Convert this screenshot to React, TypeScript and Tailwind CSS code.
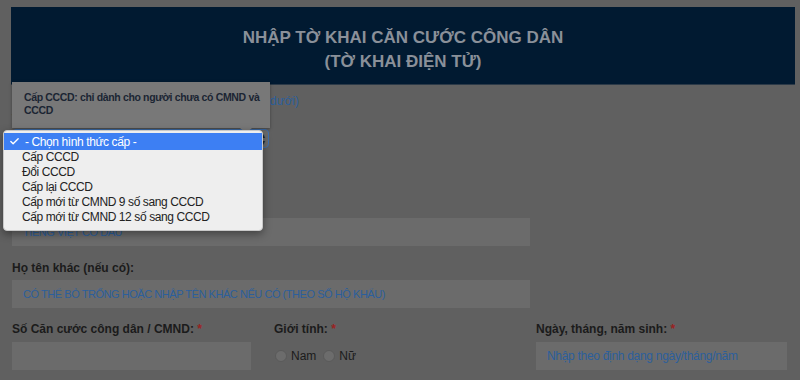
import { Check } from "lucide-react";

const OPTIONS = [
  "Cấp CCCD",
  "Đổi CCCD",
  "Cấp lại CCCD",
  "Cấp mới từ CMND 9 số sang CCCD",
  "Cấp mới từ CMND 12 số sang CCCD",
];

function Label({ text, required }: { text: string; required?: boolean }) {
  return (
    <div className="text-[12px] font-bold leading-[14px] text-[#1b1b1b]">
      {text}
      {required && <span className="text-[#9a2222]"> *</span>}
    </div>
  );
}

function Field({ value }: { value?: string }) {
  return (
    <div className="h-[28px] bg-[#6b6b6b] flex items-center px-[11px] text-[11px] tracking-[-0.45px] text-[#2b5f9c] whitespace-nowrap overflow-hidden">
      {value}
    </div>
  );
}

function Radio({ label }: { label: string }) {
  return (
    <label className="flex items-center gap-[4px] text-[12px] text-[#1b1b1b]">
      <span className="w-[12px] h-[12px] rounded-full bg-[#6c6c6c] border border-[#5a5a5a]" />
      {label}
    </label>
  );
}

export default function App() {
  return (
    <div
      className="relative w-[800px] h-[380px] overflow-hidden bg-[#606060]"
      style={{ fontFamily: '"Liberation Sans", Arial, sans-serif' }}
    >
      <div className="pl-[11px] pr-[5px] pt-[7px]">
        <div className="h-[78px] bg-[#011a31] border-b border-[#2c3a48] pt-[8px] flex flex-col items-center justify-center text-[17px] font-bold leading-[24px] text-[#8a9099]">
          <div>NHẬP TỜ KHAI CĂN CƯỚC CÔNG DÂN</div>
          <div>(TỜ KHAI ĐIỆN TỬ)</div>
        </div>

        <div className="pl-[1px] pr-[8px]">
          <div className="mt-[9px] w-[287px] flex justify-end whitespace-nowrap overflow-hidden text-[12px] leading-[14px] text-[#2b5f9c]">
            <span>(xem hướng dẫn ở phía dưới)</span>
          </div>
          <div className="mt-[4px]">
            <Label text="Vui lòng chọn hình thức cấp thẻ:" required />
          </div>
          <div className="mt-[3px] w-[257px] h-[19px] rounded-[4px] border border-[#3d6fb0] bg-[#6b6b6b] flex items-center justify-end pr-[3px] text-[8px] leading-[7px] text-[#222]">
            <span className="flex flex-col items-center">
              <span>▴</span>
              <span>▾</span>
            </span>
          </div>
          <div className="mt-[52px]">
            <Label text="Họ, chữ đệm và tên khai sinh:" required />
          </div>
          <div className="mt-[4px] w-[518px]">
            <Field value="TIẾNG VIỆT CÓ DẤU" />
          </div>

          <div className="mt-[15px]">
            <Label text="Họ tên khác (nếu có):" />
          </div>
          <div className="mt-[5px] w-[518px]">
            <Field value="CÓ THỂ BỎ TRỐNG HOẶC NHẬP TÊN KHÁC NẾU CÓ (THEO SỐ HỘ KHẨU)" />
          </div>

          <div className="mt-[14px] grid grid-cols-[262px_262px_1fr]">
            <div className="pr-[23px]">
              <Label text="Số Căn cước công dân / CMND:" required />
              <div className="mt-[6px]">
                <Field />
              </div>
            </div>
            <div>
              <Label text="Giới tính:" required />
              <div className="mt-[6px] h-[28px] pl-[1px] flex items-center gap-[7px]">
                <Radio label="Nam" />
                <Radio label="Nữ" />
              </div>
            </div>
            <div>
              <Label text="Ngày, tháng, năm sinh:" required />
              <div className="mt-[6px] h-[28px] bg-[#6b6b6b] flex items-center px-[11px] text-[12px] tracking-[-0.3px] text-[#2b5f9c] whitespace-nowrap">
                Nhập theo định dạng ngày/tháng/năm
              </div>
            </div>
          </div>
        </div>
      </div>

      {/* tooltip */}
      <div className="absolute left-[12px] top-[82px] w-[258px] h-[46px] bg-[#787878] shadow-[0_1px_3px_rgba(0,0,0,0.35)] pl-[12px] pt-[9px] text-[10.5px] font-bold leading-[13px] tracking-[-0.35px] whitespace-nowrap text-[#1b2533]">
        <div>Cấp CCCD: chỉ dành cho người chưa có CMND và</div>
        <div>CCCD</div>
        <span className="absolute left-[228px] top-[46px] w-0 h-0 border-l-[6px] border-r-[6px] border-t-[5px] border-l-transparent border-r-transparent border-t-[#787878]" />
      </div>

      {/* open dropdown list */}
      <div className="absolute left-[3px] top-[130px] w-[260px] h-[101px] rounded-[4px] bg-[#eeeeee] border border-[#c8c8c8] shadow-[0_3px_8px_rgba(0,0,0,0.4)] pt-[2px] text-[12px] tracking-[-0.4px] text-[#222]">
        <div className="h-[17px] bg-[#3d7ff3] text-white flex items-center">
          <Check className="w-[11px] h-[11px] ml-[5px] mr-[5px]" strokeWidth={3} />
          <span>- Chọn hình thức cấp -</span>
        </div>
        {OPTIONS.map((o) => (
          <div key={o} className="h-[15px] leading-[15px] pl-[18px]">
            {o}
          </div>
        ))}
      </div>
    </div>
  );
}
